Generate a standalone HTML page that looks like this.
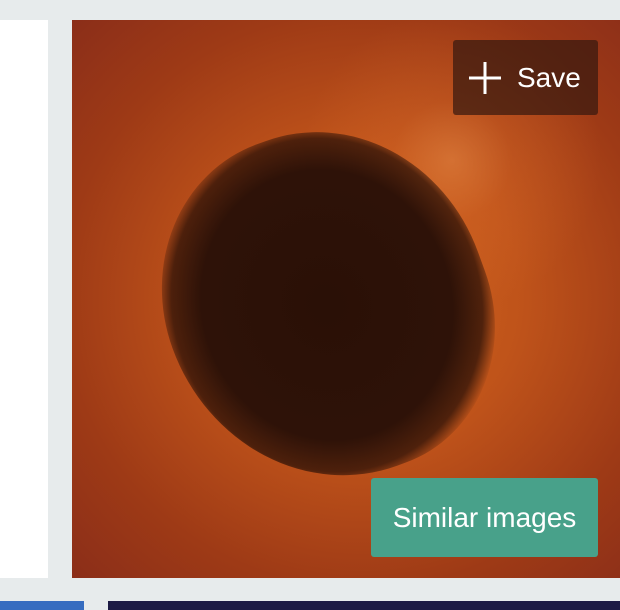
<!DOCTYPE html>
<html><head><style>
body{margin:0;width:620px;height:610px;background:#e7ebec;position:relative;overflow:hidden;font-family:"Liberation Sans",sans-serif}
.w{position:absolute;left:0;top:20px;width:48px;height:558px;background:#fff}
.img{position:absolute;left:72px;top:20px;width:548px;height:558px;overflow:hidden;
background:radial-gradient(circle at 380px 140px,rgba(240,150,80,.45) 0,rgba(230,120,50,.2) 60px,transparent 150px),
radial-gradient(ellipse at 290px 280px,#d2661f 0,#bf531a 160px,#9e3a16 300px,#82281a 460px);}
.blob{position:absolute;left:95px;top:110px;width:320px;height:350px;border-radius:48% 52% 45% 55%;background:radial-gradient(ellipse at 50% 50%,#2a1006 0,#2e1208 55%,rgba(50,20,8,.8) 68%,transparent 75%);transform:rotate(-20deg)}
.save{position:absolute;left:453px;top:40px;width:145px;height:75px;background:rgba(55,25,15,.72);border-radius:3px;color:#fff;font-size:28px;display:flex;align-items:center}
.sim{position:absolute;left:371px;top:478px;width:227px;height:79px;background:#48a18a;border-radius:3px;color:#fff;font-size:28px;display:flex;align-items:center;justify-content:center}
.b1{position:absolute;left:0;top:601px;width:84px;height:9px;background:#366cc0}
.b2{position:absolute;left:108px;top:601px;width:512px;height:9px;background:#1c1a44}
</style></head><body>
<div class="w"></div>
<div class="img"><div class="blob"></div></div>
<div class="save"><svg width="36" height="36" style="margin-left:14px;margin-right:14px" viewBox="0 0 36 36"><path d="M18 2V34M2 18H34" stroke="#fff" stroke-width="3"/></svg>Save</div>
<div class="sim">Similar images</div>
<div class="b1"></div><div class="b2"></div>
</body></html>
